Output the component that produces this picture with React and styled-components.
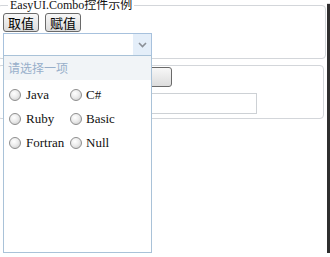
import React from "react";
import styled, { createGlobalStyle } from "styled-components";

const GlobalStyle = createGlobalStyle`
  html, body {
    margin: 0;
    padding: 0;
    background: #fff;
  }
  body {
    font-family: "Liberation Serif", "Noto Sans CJK SC", serif;
  }
  * {
    box-sizing: border-box;
  }
`;

const Frame = styled.div`
  position: relative;
  width: 327px;
  height: 253px;
  background: #fff;
  overflow: hidden;
  box-shadow: 3px 4px 1px #2f2f2f;
`;

const Group = styled.fieldset`
  margin: ${(p) => p.$top}px ${(p) => p.$right}px 0 -3px;
  padding: ${(p) => p.$padTop}px 0 ${(p) => p.$padBottom}px 5px;
  border: 1px solid #d3d6da;
  border-radius: 4px;
  min-width: 0;
`;

const Legend = styled.legend`
  margin-left: 5px;
  padding: 0 2px;
  font-family: "Liberation Serif", "Noto Sans CJK SC", serif;
  font-size: 12px;
  line-height: 14px;
  color: #111;
`;

const ButtonRow = styled.div`
  display: flex;
  gap: 6px;
`;

const Button = styled.button`
  height: ${(p) => p.$height || 19}px;
  width: ${(p) => (p.$width ? `${p.$width}px` : "auto")};
  padding: 0 4px;
  font-family: "Noto Sans CJK SC", sans-serif;
  font-size: 13px;
  line-height: 17px;
  color: #000;
  border: 1px solid #6a6a6a;
  border-radius: 3px;
  background: linear-gradient(#f7f7f7, #dcdcdc);
`;

const Combo = styled.div`
  display: flex;
  margin-top: 1px;
  width: 149px;
  height: 23px;
  border: 1px solid #a7c1dd;
  background: #fff;
`;

const ComboText = styled.div`
  flex: 1;
`;

const ComboArrow = styled.div`
  width: 18px;
  display: flex;
  align-items: center;
  justify-content: center;
  background: #e4eef9;
`;

const TextBox = styled.div`
  margin-top: 3px;
  width: 254px;
  height: 21px;
  border: 1px solid #cdd1d5;
  background: #fff;
`;

const Panel = styled.div`
  position: absolute;
  top: 55px;
  left: 3px;
  width: 149px;
  height: 198px;
  border: 1px solid #a9c2d8;
  background: #fff;
`;

const PanelHeader = styled.div`
  height: 24px;
  padding-left: 4px;
  background: #f1f4f7;
  color: #98afca;
  font-family: "Noto Sans CJK SC", sans-serif;
  font-size: 12px;
  line-height: 24px;
`;

const OptionGrid = styled.div`
  display: grid;
  grid-template-columns: 61px 61px;
  grid-auto-rows: 24px;
  padding: 3px 0 0 5px;
`;

const Option = styled.label`
  display: flex;
  align-items: center;
  gap: ${(p) => p.$gap}px;
  font-family: "Liberation Serif", serif;
  font-size: 13px;
  color: #111;
  white-space: nowrap;
`;

const Radio = styled.span`
  width: 12px;
  height: 12px;
  flex: none;
  border-radius: 50%;
  border: 1px solid #8e8e8e;
  background: radial-gradient(circle at 40% 35%, #ffffff 0%, #ececec 45%, #c6c6c6 100%);
`;

const options = [
  ["Java", "C#"],
  ["Ruby", "Basic"],
  ["Fortran", "Null"],
];

export default function App() {
  return (
    <>
      <GlobalStyle />
      <Frame>
        <Group $top={-2} $right={1} $padTop={1} $padBottom={2}>
          <Legend>EasyUI.Combo控件示例</Legend>
          <ButtonRow>
            <Button>取值</Button>
            <Button>赋值</Button>
          </ButtonRow>
          <Combo>
            <ComboText />
            <ComboArrow>
              <svg width="9" height="6" viewBox="0 0 9 6">
                <path d="M1 1 L4.5 4.5 L8 1" fill="none" stroke="#8a8f96" strokeWidth="1.6" />
              </svg>
            </ComboArrow>
          </Combo>
        </Group>
        <Group $top={6} $right={3} $padTop={1} $padBottom={4}>
          <Button $width={169} $height={20} />
          <TextBox />
        </Group>
        <Panel>
          <PanelHeader>请选择一项</PanelHeader>
          <OptionGrid>
            {options.flat().map((name, i) => (
              <Option key={name} $gap={i % 2 ? 4 : 5}>
                <Radio />
                {name}
              </Option>
            ))}
          </OptionGrid>
        </Panel>
      </Frame>
    </>
  );
}
